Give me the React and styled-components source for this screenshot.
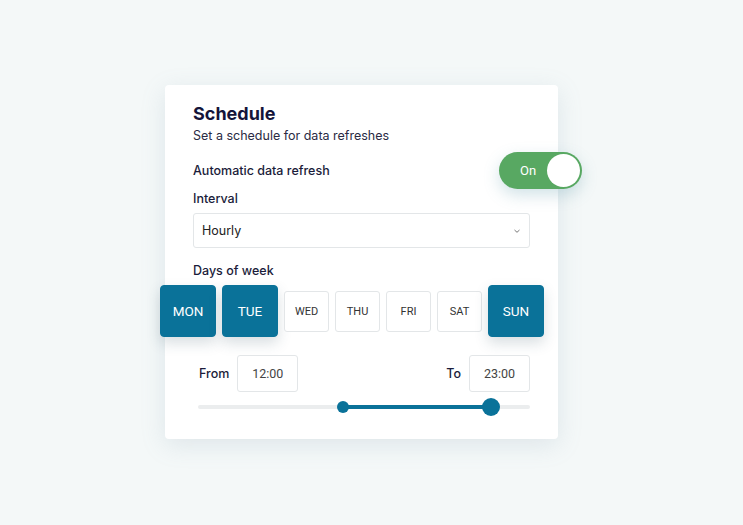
import React, { useState } from 'react';
import styled, { createGlobalStyle } from 'styled-components';

const GlobalStyle = createGlobalStyle`
  html, body {
    margin: 0;
    padding: 0;
    background: #f4f8f8;
  }
  body {
    font-family: Inter, "Noto Sans", sans-serif;
    color: #1b1c3a;
  }
`;

const Page = styled.div`
  width: 743px;
  height: 525px;
  display: flex;
  align-items: flex-start;
  padding: 85px 0 0 165px;
  box-sizing: border-box;
  overflow: hidden;
`;

const Card = styled.div`
  width: 393px;
  flex-shrink: 0;
  box-sizing: border-box;
  background: #fff;
  border-radius: 4px;
  padding: 17px 28px 23px;
  box-shadow: 0 6px 24px rgba(120, 150, 170, 0.18);
`;

const Title = styled.h2`
  margin: 0;
  font-size: 18px;
  line-height: 24px;
  font-weight: 700;
  color: #14143a;
`;

const Subtitle = styled.p`
  margin: 1px 0 0;
  font-size: 12.5px;
  line-height: 18px;
  color: #2a2b44;
`;

const Label = styled.div`
  font-size: 12.5px;
  line-height: 18px;
  font-weight: 500;
  color: #1b1c3a;
  margin-top: ${({ $mt }) => $mt || 0}px;
`;

const RefreshRow = styled.div`
  display: flex;
  justify-content: space-between;
  align-items: center;
  margin-top: 7px;
  margin-right: -52px;
`;

const Toggle = styled.button`
  width: 83px;
  height: 37px;
  border-radius: 19px;
  border: none;
  background: ${({ $on }) => ($on ? '#58a862' : '#c9ced4')};
  box-shadow: 0 6px 16px rgba(90, 150, 170, 0.28);
  display: flex;
  align-items: center;
  padding: 0 2px 0 0;
  cursor: pointer;
  font-family: Roboto, sans-serif;
`;

const ToggleText = styled.span`
  flex: 1;
  color: #fff;
  font-size: 13px;
  text-align: center;
  padding-left: 10px;
`;

const Knob = styled.span`
  width: 33px;
  height: 33px;
  border-radius: 50%;
  background: #fff;
`;

const Select = styled.div`
  margin-top: 5px;
  height: 35px;
  box-sizing: border-box;
  border: 1px solid #e3e6e8;
  border-radius: 3px;
  display: flex;
  align-items: center;
  justify-content: space-between;
  padding: 0 8px 0 8px;
  font-size: 12.5px;
  color: #222;
`;

const DaysRow = styled.div`
  display: flex;
  align-items: center;
  gap: 6px;
  margin: 5px -20px 0 -33px;
`;

const Day = styled.button`
  flex-shrink: 0;
  width: ${({ $active }) => ($active ? 56 : 45)}px;
  height: ${({ $active }) => ($active ? 52 : 41)}px;
  border-radius: ${({ $active }) => ($active ? 4 : 3)}px;
  border: 1px solid ${({ $active }) => ($active ? '#0a7299' : '#e3e6e8')};
  background: ${({ $active }) => ($active ? '#0a7299' : '#fff')};
  color: ${({ $active }) => ($active ? '#fff' : '#333')};
  font-family: Roboto, sans-serif;
  font-size: ${({ $active }) => ($active ? 13.5 : 11)}px;
  box-shadow: ${({ $active }) => ($active ? '0 6px 14px rgba(40, 70, 90, 0.18)' : 'none')};
  padding: 0;
  cursor: pointer;
`;

const TimeRow = styled.div`
  display: flex;
  align-items: center;
  justify-content: space-between;
  margin-top: 18px;
  padding-left: 6px;
`;

const TimeGroup = styled.div`
  display: flex;
  align-items: center;
  gap: 8px;
  font-size: 12.5px;
  font-weight: 500;
  color: #1b1c3a;
`;

const TimeInput = styled.div`
  width: 61px;
  height: 37px;
  box-sizing: border-box;
  border: 1px solid #e3e6e8;
  border-radius: 3px;
  display: flex;
  align-items: center;
  justify-content: center;
  font-family: Roboto, sans-serif;
  font-size: 12.5px;
  font-weight: 400;
  color: #444;
`;

const Slider = styled.div`
  position: relative;
  height: 18px;
  margin: 6px 0 0 5px;
`;

const Track = styled.div`
  position: absolute;
  left: 0;
  right: 0;
  top: 7px;
  height: 4px;
  border-radius: 2px;
  background: #ebedee;
`;

const Range = styled.div`
  position: absolute;
  top: 7px;
  height: 3.5px;
  background: #0a7299;
`;

const Thumb = styled.div`
  position: absolute;
  top: 50%;
  width: ${({ $size }) => $size}px;
  height: ${({ $size }) => $size}px;
  border-radius: 50%;
  background: #0a7299;
  transform: translate(-50%, -50%);
`;

const days = ['MON', 'TUE', 'WED', 'THU', 'FRI', 'SAT', 'SUN'];

export default function App() {
  const [on, setOn] = useState(true);
  const [active, setActive] = useState(['MON', 'TUE', 'SUN']);
  const from = 43.7;
  const to = 88.2;

  const toggleDay = (d) => {
    setActive(active.includes(d) ? active.filter((x) => x !== d) : [...active, d]);
  };

  return (
    <Page>
      <GlobalStyle />
      <Card>
        <Title>Schedule</Title>
        <Subtitle>Set a schedule for data refreshes</Subtitle>
        <RefreshRow>
          <Label>Automatic data refresh</Label>
          <Toggle $on={on} onClick={() => setOn(!on)}>
            <ToggleText>{on ? 'On' : 'Off'}</ToggleText>
            <Knob />
          </Toggle>
        </RefreshRow>
        <Label $mt={1}>Interval</Label>
        <Select>
          <span>Hourly</span>
          <svg width="8" height="6" viewBox="0 0 8 6">
            <path d="M1.5 2 L4 4.3 L6.5 2" fill="none" stroke="#777" strokeWidth="1" />
          </svg>
        </Select>
        <Label $mt={14}>Days of week</Label>
        <DaysRow>
          {days.map((d) => (
            <Day key={d} $active={active.includes(d)} onClick={() => toggleDay(d)}>
              {d}
            </Day>
          ))}
        </DaysRow>
        <TimeRow>
          <TimeGroup>
            From
            <TimeInput>12:00</TimeInput>
          </TimeGroup>
          <TimeGroup>
            To
            <TimeInput>23:00</TimeInput>
          </TimeGroup>
        </TimeRow>
        <Slider>
          <Track />
          <Range style={{ left: `${from}%`, width: `${to - from}%` }} />
          <Thumb $size={12} style={{ left: `${from}%` }} />
          <Thumb $size={18} style={{ left: `${to}%` }} />
        </Slider>
      </Card>
    </Page>
  );
}
